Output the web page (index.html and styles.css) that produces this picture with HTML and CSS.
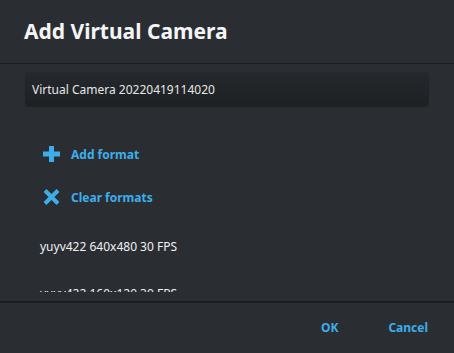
FILE: index.html
```html
<!DOCTYPE html>
<html>
<head>
<meta charset="utf-8">
<link rel="stylesheet" href="styles.css">
</head>
<body>
<div class="dialog">
  <header class="header"><h1 class="title">Add Virtual Camera</h1></header>
  <main class="body">
    <div class="field">Virtual Camera 20220419114020</div>
    <div class="actions">
      <div class="action">
        <svg class="icon" viewBox="0 0 17 16" width="17" height="16"><path d="M6 0h5v5.5h6v5h-6v5.5h-5v-5.5h-6v-5h6z" fill="#3daee9"/></svg>
        <span>Add format</span>
      </div>
      <div class="action">
        <svg class="icon" viewBox="0 0 17 16" width="17" height="16"><path d="M2 1.5L15 14.5M15 1.5L2 14.5" stroke="#3daee9" stroke-width="4" stroke-linecap="butt"/></svg>
        <span>Clear formats</span>
      </div>
    </div>
    <div class="list">
      <div class="item">yuyv422 640x480 30 FPS</div>
      <div class="item">yuyv422 160x120 30 FPS</div>
    </div>
  </main>
  <footer class="footer">
    <span class="btn">OK</span>
    <span class="btn">Cancel</span>
  </footer>
</div>
</body>
</html>
```
FILE: styles.css
```css
html, body { margin: 0; padding: 0; }
body {
  width: 454px; height: 353px; overflow: hidden;
  background: #2a2e33;
  font-family: "Noto Sans", "Open Sans", sans-serif;
  color: #eff0f1;
}
.dialog { display: flex; flex-direction: column; height: 353px; }
.header {
  height: 64px; box-sizing: border-box;
  border-bottom: 1px solid #1b1d20;
  display: flex; align-items: center;
  padding: 0 24px 2px;
}
.title { margin: 0; font-size: 21px; font-weight: 700; color: #f4f5f6; }
.body { flex: 1; padding: 8px 25px 0; overflow: hidden; height: 236px; box-sizing: border-box; }
.field {
  height: 34px; box-sizing: border-box;
  border-radius: 3px;
  background: linear-gradient(#25282c, #1e2124);
  box-shadow: 0 1px 1px rgba(0,0,0,0.25);
  padding: 0 7px; display: flex; align-items: center;
  font-size: 12px; color: #e6e7e8;
}
.actions { padding: 36px 0 0 18px; display: flex; flex-direction: column; gap: 19px; }
.action { display: flex; align-items: center; height: 24px; gap: 11px; color: #3daee9; font-weight: 700; font-size: 12px; }
.icon { display: block; }
.list { padding: 14px 0 0 15px; height: 83px; box-sizing: border-box; overflow: hidden; }
.item { font-size: 12px; height: 47px; line-height: 47px; color: #eff0f1; }
.footer {
  height: 52px; box-sizing: border-box;
  border-top: 2px solid #1b1d20;
  display: flex; justify-content: flex-end; align-items: center;
  padding: 0 26px 2px 0; gap: 50px;
}
.btn { color: #3daee9; font-weight: 700; font-size: 12px; }
```
